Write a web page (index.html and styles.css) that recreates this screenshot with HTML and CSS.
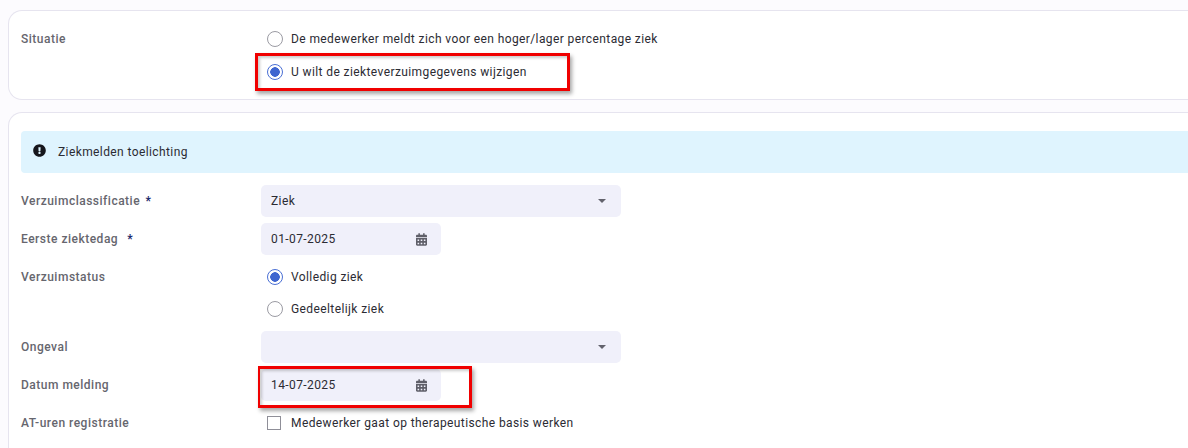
FILE: index.html
```html
<!DOCTYPE html>
<html lang="en">
<head>
  <meta charset="UTF-8">
  <title>Ziekmelden</title>
  <link rel="stylesheet" href="styles.css">
</head>
<body>
  <section class="card card-situatie">
    <div class="row row-situatie">
      <div class="label">Situatie</div>
      <div class="options">
        <label class="radio-line"><span class="radio"></span>De medewerker meldt zich voor een hoger/lager percentage ziek</label>
        <label class="radio-line"><span class="radio checked"></span>U wilt de ziekteverzuimgegevens wijzigen</label>
      </div>
    </div>
    <div class="marker marker-situatie"></div>
  </section>

  <section class="card card-form">
    <div class="info">
      <svg class="info-icon" viewBox="0 0 512 512"><path d="M504 256c0 137-111 248-248 248S8 393 8 256 119 8 256 8s248 111 248 248zm-248 50c-25.400 0-46 20.600-46 46s20.600 46 46 46 46-20.600 46-46-20.600-46-46-46zm-43.700-165.400l7.400 136c.3 6.400 5.600 11.400 12 11.400h48.500c6.400 0 11.700-5 12-11.400l7.400-136c.4-6.900-5.100-12.600-12-12.600h-63.800c-6.900 0-12.400 5.700-12 12.600z"/></svg>
      Ziekmelden toelichting
    </div>

    <div class="row">
      <div class="label">Verzuimclassificatie <span class="req">*</span></div>
      <div class="field select">Ziek<span class="caret"></span></div>
    </div>
    <div class="row">
      <div class="label">Eerste ziektedag &nbsp;<span class="req">*</span></div>
      <div class="field date">01-07-2025
        <svg class="cal" viewBox="0 0 448 512"><path d="M0 464c0 26.500 21.500 48 48 48h352c26.500 0 48-21.500 48-48V192H0v272zm320-196c0-6.600 5.400-12 12-12h40c6.600 0 12 5.400 12 12v40c0 6.600-5.400 12-12 12h-40c-6.600 0-12-5.400-12-12v-40zm0 128c0-6.600 5.400-12 12-12h40c6.600 0 12 5.400 12 12v40c0 6.600-5.400 12-12 12h-40c-6.600 0-12-5.400-12-12v-40zM192 268c0-6.600 5.400-12 12-12h40c6.600 0 12 5.400 12 12v40c0 6.600-5.400 12-12 12h-40c-6.600 0-12-5.400-12-12v-40zm0 128c0-6.600 5.400-12 12-12h40c6.600 0 12 5.400 12 12v40c0 6.600-5.400 12-12 12h-40c-6.600 0-12-5.400-12-12v-40zM64 268c0-6.600 5.400-12 12-12h40c6.600 0 12 5.400 12 12v40c0 6.600-5.400 12-12 12H76c-6.600 0-12-5.400-12-12v-40zm0 128c0-6.600 5.400-12 12-12h40c6.600 0 12 5.400 12 12v40c0 6.600-5.400 12-12 12H76c-6.600 0-12-5.400-12-12v-40zM400 64h-48V16c0-8.800-7.200-16-16-16h-32c-8.800 0-16 7.200-16 16v48H160V16c0-8.800-7.200-16-16-16h-32c-8.800 0-16 7.200-16 16v48H48C21.500 64 0 85.500 0 112v48h448v-48c0-26.500-21.500-48-48-48z"/></svg>
      </div>
    </div>
    <div class="row row-radio">
      <div class="label">Verzuimstatus</div>
      <div class="options">
        <label class="radio-line"><span class="radio checked"></span>Volledig ziek</label>
        <label class="radio-line"><span class="radio"></span>Gedeeltelijk ziek</label>
      </div>
    </div>
    <div class="row">
      <div class="label">Ongeval</div>
      <div class="field select"><span class="caret"></span></div>
    </div>
    <div class="row">
      <div class="label">Datum melding</div>
      <div class="field date">14-07-2025
        <svg class="cal" viewBox="0 0 448 512"><path d="M0 464c0 26.500 21.500 48 48 48h352c26.500 0 48-21.500 48-48V192H0v272zm320-196c0-6.600 5.400-12 12-12h40c6.600 0 12 5.400 12 12v40c0 6.600-5.400 12-12 12h-40c-6.600 0-12-5.400-12-12v-40zm0 128c0-6.600 5.400-12 12-12h40c6.600 0 12 5.400 12 12v40c0 6.600-5.400 12-12 12h-40c-6.600 0-12-5.400-12-12v-40zM192 268c0-6.600 5.400-12 12-12h40c6.600 0 12 5.400 12 12v40c0 6.600-5.400 12-12 12h-40c-6.600 0-12-5.400-12-12v-40zm0 128c0-6.600 5.400-12 12-12h40c6.600 0 12 5.400 12 12v40c0 6.600-5.400 12-12 12h-40c-6.600 0-12-5.400-12-12v-40zM64 268c0-6.600 5.400-12 12-12h40c6.600 0 12 5.400 12 12v40c0 6.600-5.400 12-12 12H76c-6.600 0-12-5.400-12-12v-40zm0 128c0-6.600 5.400-12 12-12h40c6.600 0 12 5.400 12 12v40c0 6.600-5.400 12-12 12H76c-6.600 0-12-5.400-12-12v-40zM400 64h-48V16c0-8.800-7.200-16-16-16h-32c-8.800 0-16 7.200-16 16v48H160V16c0-8.800-7.200-16-16-16h-32c-8.800 0-16 7.200-16 16v48H48C21.500 64 0 85.500 0 112v48h448v-48c0-26.500-21.500-48-48-48z"/></svg>
      </div>
    </div>
    <div class="row row-last">
      <div class="label">AT-uren registratie</div>
      <label class="check-line"><span class="check"></span>Medewerker gaat op therapeutische basis werken</label>
    </div>
    <div class="marker marker-datum"></div>
  </section>
</body>
</html>
```

FILE: styles.css
```css
html {
  overflow: hidden;
}
body {
  margin: 0;
  height: 448px;
  overflow: hidden;
  padding: 10px 0 0 8px;
  box-sizing: border-box;
  background: #fcfbfe;
  font-family: Roboto, sans-serif;
  font-size: 12px;
  letter-spacing: 0.4px;
  color: #2b2b33;
}
/* the cards run on past the window, so no right edge is drawn */
.card {
  position: relative;
  box-sizing: border-box;
  background: #fff;
  border: 1px solid #e6e4ef;
  border-right: none;
  border-radius: 14px 0 0 14px;
  padding-left: 12px;
}
.card-situatie {
  height: 90px;
  margin-bottom: 12px;
  padding-top: 11px;
}
.card-form {
  height: 336px;
  padding-top: 18px;
  border-bottom: none;
  border-bottom-left-radius: 0;
}
.row {
  display: flex;
  align-items: center;
  min-height: 32px;
  margin-bottom: 6px;
}
.row-situatie {
  align-items: flex-start;
  margin: 0;
}
.row-radio {
  align-items: flex-start;
}
.row-last {
  margin-bottom: 0;
}
.label {
  width: 240px;
  flex: none;
  color: #66666e;
  font-weight: 500;
  letter-spacing: 0.5px;
}
.row-situatie .label {
  line-height: 34px;
}
.row-radio .label {
  line-height: 32px;
}
.req {
  margin-left: 2px;
  color: #1d2b6b;
  font-weight: 700;
}
.options {
  padding-left: 6px;
}
.radio-line {
  display: flex;
  align-items: center;
  height: 33px;
}
.row-radio .radio-line {
  height: 32px;
}
.radio {
  width: 16px;
  height: 16px;
  box-sizing: border-box;
  margin-right: 8px;
  border: 1px solid #9b9ba3;
  border-radius: 50%;
  background: #fff;
}
.radio.checked {
  border-color: #4a6fd4;
  background: radial-gradient(circle, #3f66d0 0 4.500px, #fff 5px);
}
.field {
  position: relative;
  display: flex;
  align-items: center;
  height: 32px;
  box-sizing: border-box;
  padding-left: 10px;
  background: #f0f0fa;
  border-radius: 5px;
}
.select {
  width: 360px;
}
.date {
  width: 180px;
}
.caret {
  position: absolute;
  right: 15px;
  top: 14px;
  border-left: 4.500px solid transparent;
  border-right: 4.500px solid transparent;
  border-top: 4.500px solid #62626c;
}
.cal {
  position: absolute;
  left: 155px;
  top: 10px;
  width: 11px;
  height: 13px;
  fill: #5f5f69;
}
.info {
  display: flex;
  align-items: center;
  height: 42px;
  box-sizing: border-box;
  margin-bottom: 12px;
  padding-left: 12px;
  background: #dff4fe;
  border-radius: 4px 0 0 4px;
}
.info-icon {
  width: 13px;
  height: 13px;
  margin: -4px 12px 0 0;
  fill: #16161c;
}
.check-line {
  display: flex;
  align-items: center;
  padding-left: 6px;
}
.check {
  width: 14px;
  height: 14px;
  box-sizing: border-box;
  margin-right: 10px;
  border: 1px solid #8f8f98;
  background: #fff;
}
.marker {
  position: absolute;
  box-sizing: border-box;
  border: 3px solid #f00000;
  box-shadow: 2px 3px 4px rgba(0, 0, 0, 0.35), inset 2px 2px 3px rgba(0, 0, 0, 0.2);
  pointer-events: none;
}
.marker-situatie {
  left: 246px;
  top: 42px;
  width: 315px;
  height: 38px;
}
.marker-datum {
  left: 249px;
  top: 253px;
  width: 214px;
  height: 42px;
  border-left-width: 2px;
}
```
